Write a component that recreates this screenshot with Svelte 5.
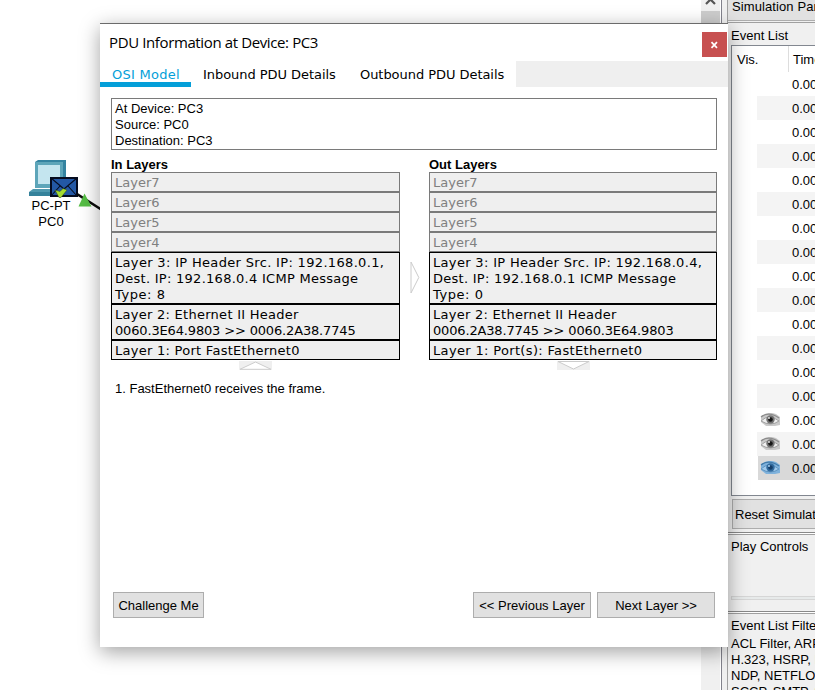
<script>
  const upper = ['Layer7', 'Layer6', 'Layer5', 'Layer4'];
  const stacks = [
    {
      title: 'In Layers',
      layers: [
        [['Layer 3: IP Header Src. IP: 192.168.0.1,', 0.33], ['Dest. IP: 192.168.0.4 ICMP Message', 0.27], ['Type: 8', 0.55]],
        [['Layer 2: Ethernet II Header', 0.27], ['0060.3E64.9803 >> 0006.2A38.7745', -0.16]],
        [['Layer 1: Port FastEthernet0', 0.27]]
      ]
    },
    {
      title: 'Out Layers',
      layers: [
        [['Layer 3: IP Header Src. IP: 192.168.0.4,', 0.33], ['Dest. IP: 192.168.0.1 ICMP Message', 0.27], ['Type: 0', 0.55]],
        [['Layer 2: Ethernet II Header', 0.27], ['0006.2A38.7745 >> 0060.3E64.9803', -0.16]],
        [['Layer 1: Port(s): FastEthernet0', 0.34]]
      ]
    }
  ];
  const events = Array.from({ length: 17 }, (_, i) => ({ time: '0.000', eye: i >= 14, selected: i === 16 }));
</script>

<div class="screen">
  <div class="workspace">
    <div class="device">
      <svg width="50" height="40" viewBox="0 0 50 40">
        <path d="M6 2L9 0H37V24L33 28H6Z" fill="#3483a0" />
        <path d="M6 2H34V28H6Z" fill="#5da5b9" />
        <rect x="9" y="5" width="22" height="19" fill="#c4e5ef" />
        <path d="M4 29H30V33L26 36H0V32Z" fill="#4e98ae" />
        <path d="M0 32H26V36H0Z" fill="#35829b" />
        <rect x="22" y="18" width="26" height="18" fill="#2358a5" stroke="#050c20" stroke-width="2" />
        <path d="M22 18L35 29L48 18M22 36L31 26M48 36L39 26" fill="none" stroke="#050c20" stroke-width="1.1" />
        <path d="M26 30L31 31.5L34 28.5L38 30L32 37.5H30Z" fill="#a4dc30" stroke="#33451c" stroke-width=".5" />
      </svg>
      <div class="device-label"><span>PC-PT</span><br /><span>PC0</span></div>
    </div>
    <svg class="link" width="36" height="28" viewBox="0 0 36 28">
      <path d="M0 3L36 26" stroke="#0b0b0b" stroke-width="2.6" />
      <path d="M7.5 2.5L14.5 15.5L1.5 15.5Z" fill="#55bd45" />
    </svg>
  </div>
  <div class="scrollbar">
    <div class="scroll-up"><svg width="12" height="8" viewBox="0 0 12 8"><path d="M1 4L5.5 -.5L10 4" fill="none" stroke="#555" stroke-width="2.2" /></svg></div>
    <div class="thumb"></div>
  </div>
  <div class="splitter"></div>
  <div class="panel">
    <div class="panel-title">Simulation Panel</div>
    <div class="event-section">
      <div class="caption">Event List</div>
      <div class="event-list">
        <div class="head"><span class="vis">Vis.</span><span class="time">Time(sec)</span></div>
        {#each events as event, i}
          <div class="row" class:alt={i % 2 === 1} class:selected={event.selected}>
            <span class="eye">
              {#if event.eye}
                <svg width="22" height="14" viewBox="0 0 22 14">
                  <path d="M1 3Q9-2 16 1L20 4V12L15 13H6L1 9Z" fill={event.selected ? '#7fb2dc' : '#c9c9c9'} />
                  <path d="M1 8Q9 0 19 8Q11 14 1 8Z" fill={event.selected ? '#a1caec' : '#efefef'} stroke={event.selected ? '#5f94c0' : '#a0a0a0'} />
                  <path d="M1 4Q9-2 19 5" fill="none" stroke={event.selected ? '#427aa8' : '#8c8c8c'} stroke-width="1.2" />
                  <circle cx="10.5" cy="6.5" r="4.2" fill={event.selected ? '#326b9e' : '#737373'} />
                  <circle cx="10.5" cy="6.5" r="2.3" fill={event.selected ? '#153e69' : '#181818'} />
                  <circle cx="9" cy="5" r="1" fill={event.selected ? '#a7cfee' : '#ddd'} />
                </svg>
              {/if}
            </span>
            <span class="time">{event.time}</span>
          </div>
        {/each}
      </div>
      <div class="reset">Reset Simulation</div>
    </div>
    <div class="controls">
      <div class="caption">Play Controls</div>
      <div class="slider"></div>
    </div>
    <div class="filters">
      <div class="caption">Event List Filters - Visible Events</div>
      <div class="filter-text">ACL Filter, ARP, BGP,<br />H.323, HSRP, HSRPv6,<br />NDP, NETFLOW, NTP,<br />SCCP, SMTP, SNMP</div>
    </div>
  </div>

  <div class="dialog">
    <div class="titlebar">
      <span class="title">PDU Information at Device: PC3</span>
      <div class="close"><svg width="9" height="8" viewBox="0 0 9 8"><path d="M1.5 1.2L7 6.8M7 1.2L1.5 6.8" stroke="#fff" stroke-width="1.7" /></svg></div>
    </div>
    <div class="tabs">
      <div class="tab active"><span>OSI Model</span></div>
      <div class="tab inbound"><span>Inbound PDU Details</span></div>
      <div class="tab outbound"><span>Outbound PDU Details</span></div>
      <div class="tab-rest"></div>
    </div>
    <div class="summary">
      <div><span>At Device: PC3</span></div>
      <div><span>Source: PC0</span></div>
      <div><span>Destination: PC3</span></div>
    </div>
    <div class="stacks">
      {#each stacks as stack, i}
        <div class="stack">
          <div class="stack-title">{stack.title}</div>
          {#each upper as name}
            <div class="layer off">{name}</div>
          {/each}
          {#each stack.layers as lines}
            <div class="layer">
              {#each lines as [text, spacing]}<div style="letter-spacing: {spacing}px">{text}</div>{/each}
            </div>
          {/each}
          <svg class="arrow" width="33" height="10" viewBox="0 0 33 10">
            <rect y="1" width="33" height="9" fill="#efefef" />
            {#if i === 0}
              <path d="M1 9.3L16.5 2L32 9.3Z" fill="#fff" stroke="#ccc" />
            {:else}
              <path d="M1 1.5L16.5 9L32 1.5Z" fill="#fff" stroke="#ccc" />
            {/if}
          </svg>
        </div>
        {#if i === 0}
          <div class="between">
            <svg width="10" height="33" viewBox="0 0 10 33"><path d="M1 1V32L8.8 16.5Z" fill="#fff" stroke="#ccc" /></svg>
          </div>
        {/if}
      {/each}
    </div>
    <div class="message">1. FastEthernet0 receives the frame.</div>
    <div class="actions">
      <div class="btn challenge">Challenge Me</div>
      <div class="btn previous">&lt;&lt; Previous Layer</div>
      <div class="btn next">Next Layer &gt;&gt;</div>
    </div>
  </div>
</div>

<style>
  .screen {
    position: relative;
    display: flex;
    width: 815px;
    height: 690px;
    overflow: hidden;
    background: #fff;
    color: #000;
    font: 13px/16px 'Liberation Sans', Arial, sans-serif;
    white-space: nowrap;
  }
  .screen * { box-sizing: border-box; }
  .workspace { width: 701px; flex: none; padding: 160px 0 0 29px; }
  .device { width: 50px; }
  .device svg { display: block; }
  .device-label { width: 44px; margin-top: -2px; text-align: center; }
  .link { position: absolute; left: 77px; top: 191px; }
  .scrollbar { width: 19px; flex: none; background: #f0f0f0; }
  .scroll-up { height: 11px; padding-left: 4px; }
  .scroll-up svg { display: block; }
  .thumb { height: 40px; background: #cdcdcd; }
  .splitter { width: 8px; flex: none; background: #f0f0f0; border-right: 1px solid #a0a0a0; box-shadow: inset 1px 0 #fff, inset 2px 0 #82828c; }
  .panel { display: flex; flex-direction: column; width: 240px; flex: none; background: #f0f0f0; }
  .panel-title { height: 21px; padding: 0 0 0 4px; line-height: 14px; letter-spacing: 0.1px; background: #e1e1e1; border-bottom: 1px solid #adadad; }
  .event-section { height: 511px; margin-top: 1px; padding: 5px 0 0 3px; border-top: 1px solid #a0a0a0; }
  .caption { height: 16px; }
  .event-list { height: 451px; margin-top: 1px; padding: 0; background: #fff; border: 1px solid #828790; }
  .head { display: flex; height: 26px; line-height: 28px; padding-left: 5px; }
  .vis { width: 52px; border-right: 1px solid #ddd; }
  .head .time { padding-left: 4px; }
  .row { display: flex; height: 24px; margin-left: 25px; line-height: 26px; }
  .row.alt { background: #f4f4f4; }
  .row.selected { margin-left: 26px; background: #d9d9d9; }
  .row.selected .eye { width: 34px; padding-left: 2px; }
  .eye { width: 35px; flex: none; padding: 5px 0 0 3px; }
  .eye svg { display: block; }
  .reset { height: 30px; margin: 3px 0 0 1px; padding-left: 2px; line-height: 29px; background: #e1e1e1; border: 1px solid #adadad; }
  .controls { height: 79px; padding: 6px 0 0 3px; border-top: 1px solid #888; box-shadow: inset 0 1px #fff, inset 0 2px #a0a0a0; }
  .slider { height: 4px; margin-top: 41px; background: #e7eaea; border: 1px solid #d6d6d6; }
  .filters { height: 79px; padding: 6px 0 0 3px; border-top: 1px solid #888; box-shadow: inset 0 1px #fff, inset 0 2px #a0a0a0; }
  .filter-text { margin-top: 2px; }

  .dialog {
    position: absolute;
    left: 100px;
    top: 23px;
    width: 628px;
    height: 624px;
    display: flex;
    flex-direction: column;
    background: #fff;
    border-top: 1px solid #6b6b6b;
    box-shadow: 0 5px 19px rgba(0, 0, 0, 0.37);
  }
  .titlebar { display: flex; justify-content: space-between; height: 37px; padding-left: 9px; }
  .title { margin-top: 7px; font: 15px/22px 'Open Sans', 'Noto Sans', sans-serif; letter-spacing: -0.38px; }
  .close { display: flex; align-items: center; justify-content: center; width: 25px; height: 25px; margin: 8px 1px 0 0; background: #c75050; }
  .tabs { display: flex; height: 26px; font: 13px/27px 'DejaVu Sans', Verdana, sans-serif; letter-spacing: -0.05px; }
  .tab.active { width: 91px; padding-left: 12px; color: #049fd9; border-bottom: 5px solid #049fd9; letter-spacing: 0.27px; }
  .tab.inbound { width: 157px; padding-left: 12px; }
  .tab.outbound { width: 168px; padding-left: 12px; }
  .tab-rest { flex: 1; background: #efefef; }
  .summary { width: 606px; height: 52px; margin: 11px 0 0 11px; padding: 2px 3px 0; border: 1px solid #7a7a7a; }
  .stacks { display: flex; margin: 7px 0 0 11px; }
  .stack { width: 289px; display: flex; flex-direction: column; }
  .stack:last-child { width: 288px; }
  .stack-title { height: 15px; font-weight: bold; }
  .layer { padding: 2px 3px 0; background: #efefef; border: 1px solid #000; font: 13px/16px 'DejaVu Sans', Verdana, sans-serif; }
  .layer.off { border-color: #7a7a7a; color: #808080; }
  .arrow { align-self: center; display: block; }
  .between { width: 29px; padding: 104px 0 0 10px; }
  .message { margin: 11px 0 0 15px; }
  .actions { display: flex; margin: auto 13px 29px; }
  .btn { height: 26px; line-height: 25px; text-align: center; background: #e1e1e1; border: 1px solid #adadad; }
  .challenge { width: 91px; margin-right: auto; }
  .previous { width: 118px; margin-right: 6px; }
  .next { width: 118px; }
</style>
